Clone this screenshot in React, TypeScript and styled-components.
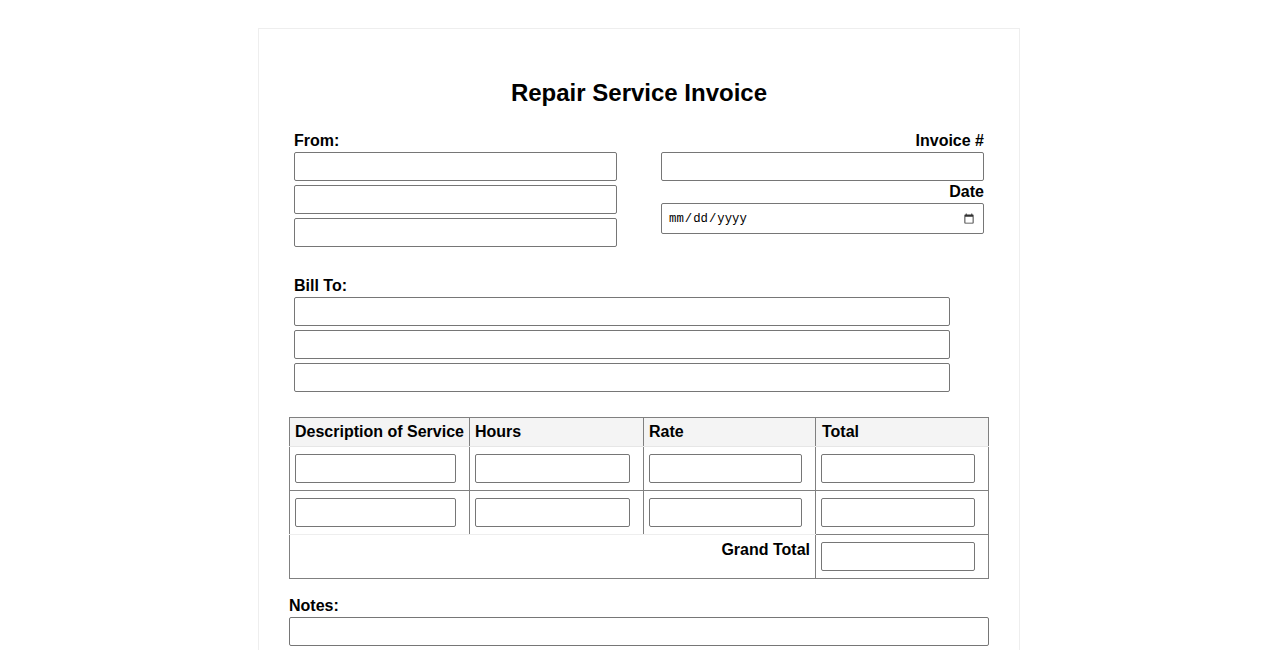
import React from "react";
import styled, { createGlobalStyle } from "styled-components";

const GlobalStyle = createGlobalStyle`
  html, body {
    margin: 0;
    padding: 0;
    overflow: hidden;
    background: #fff;
  }

  body {
    font-family: "Liberation Sans", Arial, sans-serif;
    color: #000;
  }
`;

const rows = [0, 1];

const App = () => {
  return (
    <>
      <GlobalStyle />
      <Page>
        <Sheet>
          <Title>Repair Service Invoice</Title>

          <TopRow>
            <Column>
              <Label>From:</Label>
              <TextInput type="text" />
              <TextInput type="text" />
              <TextInput type="text" />
            </Column>
            <Column>
              <Label $right>Invoice #</Label>
              <TextInput type="text" />
              <Label $right $pulled>
                Date
              </Label>
              <DateInput type="date" />
            </Column>
          </TopRow>

          <BillTo>
            <Label>Bill To:</Label>
            <TextInput type="text" />
            <TextInput type="text" />
            <TextInput type="text" />
          </BillTo>

          <ServiceTable>
            <colgroup>
              <col width={180} />
              <col width={174} />
              <col width={172} />
              <col width={173} />
            </colgroup>
            <thead>
              <tr>
                <HeadCell>Description of Service</HeadCell>
                <HeadCell>Hours</HeadCell>
                <HeadCell>Rate</HeadCell>
                <HeadCell $indent={6}>Total</HeadCell>
              </tr>
            </thead>
            <tbody>
              {rows.map((row) => (
                <tr key={row}>
                  <Cell $fadedBottom={row === 1}>
                    <CellInput $width={161} type="text" />
                  </Cell>
                  <Cell $fadedBottom={row === 1}>
                    <CellInput $width={155} type="text" />
                  </Cell>
                  <Cell $fadedBottom={row === 1}>
                    <CellInput $width={153} type="text" />
                  </Cell>
                  <Cell>
                    <CellInput $width={154} type="text" />
                  </Cell>
                </tr>
              ))}
              <tr>
                <GrandLabel colSpan={3}>Grand Total</GrandLabel>
                <Cell>
                  <CellInput $width={154} type="text" />
                </Cell>
              </tr>
            </tbody>
          </ServiceTable>

          <Notes>
            <Label>Notes:</Label>
            <TextInput type="text" />
          </Notes>
        </Sheet>
      </Page>
    </>
  );
};

export default App;

const Page = styled.div`
  display: flex;
  justify-content: center;
  padding-top: 28px;
`;

const Sheet = styled.div`
  box-sizing: border-box;
  width: 762px;
  padding: 30px 30px 40px;
  border: 1px solid #eee;
`;

const Title = styled.h1`
  margin: 20px 0 25px;
  font-size: 24px;
  line-height: 28px;
  font-weight: 700;
  text-align: center;
`;

const TopRow = styled.div`
  display: flex;
  justify-content: space-between;
  padding: 0 5px;
`;

const Column = styled.div`
  display: flex;
  flex-direction: column;
  width: 323px;
`;

const Label = styled.label<{ $right?: boolean; $pulled?: boolean }>`
  display: block;
  margin-top: ${(p) => (p.$pulled ? "-2px" : "0")};
  margin-bottom: 2px;
  font-size: 16px;
  line-height: 18px;
  font-weight: 700;
  text-align: ${(p) => (p.$right ? "right" : "left")};
`;

const TextInput = styled.input`
  display: block;
  box-sizing: border-box;
  width: 100%;
  height: 29px;
  margin: 0 0 4px;
  padding: 1px 2px;
  border: 1px solid #767676;
  border-radius: 2px;
  background: #fff;
`;

const DateInput = styled(TextInput)`
  height: 31px;
  padding: 3px 6px 1px 6px;
  font-family: "Liberation Mono", "DejaVu Sans Mono", monospace;
  font-size: 12.3px;
  color: #000;

  &::-webkit-calendar-picker-indicator {
    opacity: 0.8;
  }
`;

const BillTo = styled.div`
  width: 656px;
  margin: 26px 0 0 5px;
`;

const ServiceTable = styled.table`
  width: 700px;
  margin-top: 25px;
  border-collapse: collapse;
  table-layout: fixed;
  border: 1px solid #808080;
`;

const HeadCell = styled.th<{ $indent?: number }>`
  box-sizing: border-box;
  height: 29px;
  padding: 0 5px 0 ${(p) => p.$indent ?? 5}px;
  border: 1px solid #808080;
  border-bottom: 1px solid #e6e6e6;
  background: #f4f4f4;
  font-size: 16px;
  font-weight: 700;
  text-align: left;
  white-space: nowrap;
`;

const Cell = styled.td<{ $fadedBottom?: boolean }>`
  box-sizing: border-box;
  height: 44px;
  padding: 7px 5px;
  border: 1px solid #808080;
  border-bottom-color: ${(p) => (p.$fadedBottom ? "#eee" : "#808080")};
`;

const GrandLabel = styled.td`
  box-sizing: border-box;
  height: 44px;
  padding: 6px 5px 5px;
  border: 1px solid #808080;
  border-top: 1px solid #eee;
  font-size: 16px;
  font-weight: 700;
  text-align: right;
  vertical-align: top;
`;

const CellInput = styled.input<{ $width: number }>`
  display: block;
  box-sizing: border-box;
  width: ${(p) => p.$width}px;
  height: 29px;
  padding: 1px 2px;
  border: 1px solid #767676;
  border-radius: 2px;
  background: #fff;
`;

const Notes = styled.div`
  margin-top: 18px;
`;
